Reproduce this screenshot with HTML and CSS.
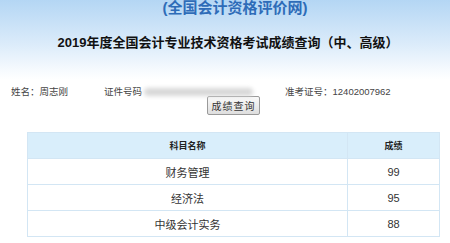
FILE: index.html
```html
<!DOCTYPE html>
<html lang="zh-CN">
<head>
    <meta charset="utf-8">
    <title>成绩查询</title>
    <link rel="stylesheet" href="styles.css">
</head>
<body>
    <div class="site-name">(全国会计资格评价网)</div>
    <h1 class="page-title">2019年度全国会计专业技术资格考试成绩查询（中、高级）</h1>

    <div class="info-row">
        <span class="info-name">姓名：周志刚</span>
        <span class="info-id">证件号码</span>
        <span class="info-blur"></span>
        <span class="info-ticket">准考证号：12402007962</span>
    </div>

    <div class="btn-row">
        <button class="query-btn">成绩查询</button>
    </div>

    <table class="score-table">
        <thead>
            <tr>
                <th class="col-subject">科目名称</th>
                <th class="col-score">成绩</th>
            </tr>
        </thead>
        <tbody>
            <tr><td>财务管理</td><td>99</td></tr>
            <tr><td>经济法</td><td>95</td></tr>
            <tr><td>中级会计实务</td><td>88</td></tr>
        </tbody>
    </table>
</body>
</html>
```

FILE: styles.css
```css
body {
    margin: 0;
    width: 450px;
    height: 243px;
    overflow: hidden;
    font-family: "Liberation Sans", "Noto Sans CJK SC", sans-serif;
    color: #333;
    background: linear-gradient(to bottom, #b4d6f4 0, #dcecfa 45px, #f6fafe 70px, #fff 80px);
}

.site-name {
    text-align: center;
    padding-left: 20px;
    font-size: 15px;
    line-height: 16px;
    font-weight: bold;
    color: #2e6cb8;
}

.page-title {
    margin: 19px 0 0 0;
    text-align: center;
    padding-left: 6px;
    font-size: 13px;
    line-height: 16px;
    font-weight: bold;
    color: #111;
}

.info-row {
    display: flex;
    align-items: center;
    margin-top: 35px;
    padding-left: 11px;
    height: 10px;
    font-size: 9.5px;
    color: #444;
}

.info-id {
    margin-left: 36px;
}

.info-blur {
    width: 109px;
    height: 8px;
    margin-left: 2px;
    margin-top: 2px;
    background: #d8d8d8;
    border-radius: 4px;
    filter: blur(2px);
}

.info-ticket {
    margin-left: 32px;
}

.btn-row {
    padding-left: 207px;
}

.query-btn {
    display: block;
    width: 53px;
    height: 19px;
    padding: 0;
    font-family: "Liberation Sans", "Noto Sans CJK SC", sans-serif;
    font-size: 10px;
    color: #333;
    letter-spacing: 1px;
    background: linear-gradient(to bottom, #fafafa, #dedede);
    border: 1px solid #9a9a9a;
    border-radius: 2px;
}

.score-table {
    margin: 17px 0 0 27px;
    width: 413px;
    border-collapse: collapse;
    background: #fff;
    font-size: 11px;
    color: #333;
}

.score-table th,
.score-table td {
    height: 25px;
    padding: 0;
    text-align: center;
    border: 1px solid #d3e6f4;
}

.score-table th {
    background-color: #d9eefb;
    font-size: 9px;
    font-weight: bold;
    color: #222;
}

.col-subject {
    width: 319px;
}
```
